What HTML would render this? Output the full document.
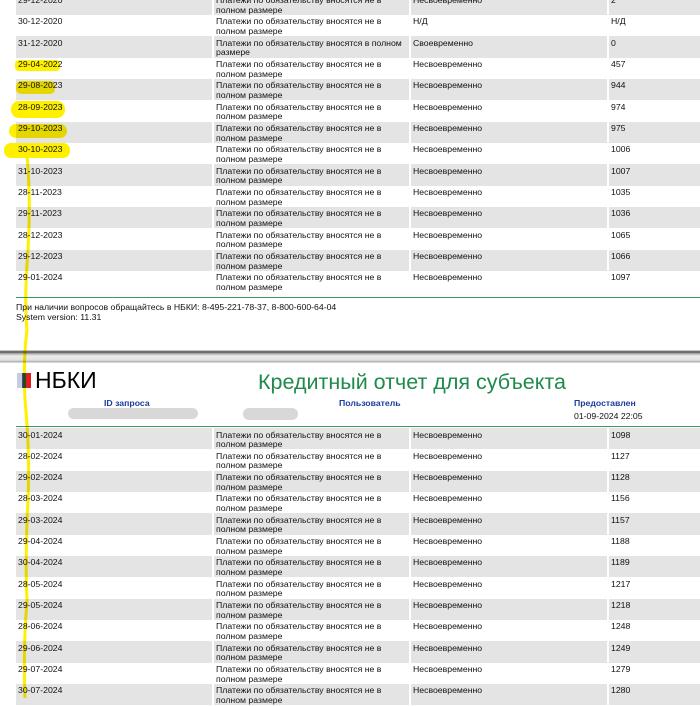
<!DOCTYPE html>
<html><head><meta charset="utf-8"><style>
*{margin:0;padding:0}
body{width:700px;height:698px;overflow:hidden;background:#fff;position:relative;font-family:"Liberation Sans",Arial,sans-serif;font-size:8.7px;color:#111}
.r{position:absolute;left:16px;width:700px;height:21.33px}
.r.g div{background:#e4e4e4}
.c{position:absolute;top:0;height:100%;padding:2.5px 3px 0 2px;box-sizing:border-box;line-height:9.6px}
.c1{left:0;width:196px}.c2{left:198px;width:195px}.c3{left:395px;width:196px}.c4{left:593px;width:110px}
.abs{position:absolute}
</style></head><body>
<div id="p1"></div>
<div class="abs" style="left:16px;top:297px;width:690px;height:1px;background:#3a9a60"></div>
<div class="abs" style="left:16px;top:302px;line-height:10px">При наличии вопросов обращайтесь в НБКИ: 8-495-221-78-37, 8-800-600-64-04<br>System version: 11.31</div>
<div class="abs" style="left:0;top:350px;width:700px;height:13px;background:linear-gradient(#fff 0,#888 1px,#555 2px,#bbb 4px,#ececec 6px,#e2e2e2 10px,#aaa 12px,#fff 13px)"></div>
<div class="abs" style="left:17px;top:373px;width:5px;height:15px;background:#c8cce0"></div>
<div class="abs" style="left:22px;top:373px;width:4px;height:15px;background:#2a50c8"></div>
<div class="abs" style="left:26px;top:373px;width:5px;height:15px;background:#e02020"></div>
<div class="abs" style="left:35px;top:367px;font-size:23px;color:#000">НБКИ</div>
<div class="abs" style="left:258px;top:370px;font-size:21.5px;color:#1f8a4c">Кредитный отчет для субъекта</div>
<div class="abs" style="left:104px;top:398px;font-weight:bold;color:#1c3c9c">ID запроса</div>
<div class="abs" style="left:339px;top:398px;font-weight:bold;color:#1c3c9c">Пользователь</div>
<div class="abs" style="left:574px;top:398px;font-weight:bold;color:#1c3c9c">Предоставлен</div>
<div class="abs" style="left:574px;top:411px">01-09-2024 22:05</div>
<div class="abs" style="left:68px;top:408px;width:130px;height:11px;border-radius:6px;background:#d8d8d8"></div>
<div class="abs" style="left:243px;top:408px;width:55px;height:12px;border-radius:6px;background:#d8d8d8"></div>
<div class="abs" style="left:16px;top:426px;width:690px;height:1px;background:#3a9a60"></div>
<div id="p2"></div>
<svg class="abs" style="left:0;top:0;mix-blend-mode:multiply" width="700" height="698">
<g fill="#fff000">
<rect x="15" y="60" width="45" height="11" rx="4"/>
<rect x="16" y="81" width="39" height="13" rx="5"/>
<rect x="11" y="101" width="54" height="17" rx="8"/>
<rect x="9" y="124" width="58" height="14" rx="7"/>
<rect x="4" y="143" width="66" height="15" rx="7"/>
</g>
<path d="M27 155 Q31 200 28 250 Q24 300 27 330 Q23 360 25 400 Q30 450 28 500 Q25 560 27 600 Q23 650 25 698" stroke="#fff000" stroke-width="3" fill="none"/>
</svg>
<script>
function rows(id,top,data,startGray){var h='';data.forEach(function(d,i){var g=(i%2==0)==startGray;h+='<div class="r'+(g?' g':'')+'" style="top:'+(top+i*21.33)+'px"><div class="c c1">'+d[0]+'</div><div class="c c2">'+d[1]+'</div><div class="c c3">'+d[2]+'</div><div class="c c4">'+d[3]+'</div></div>'});document.getElementById(id).innerHTML=h}
var P='Платежи по обязательству вносятся не в<br>полном размере',N='Несвоевременно';
rows('p1',-6.4,[['29-12-2020',P,N,'2'],['30-12-2020',P,'Н/Д','Н/Д'],['31-12-2020','Платежи по обязательству вносятся в полном<br>размере','Своевременно','0'],['29-04-2022',P,N,'457'],['29-08-2023',P,N,'944'],['28-09-2023',P,N,'974'],['29-10-2023',P,N,'975'],['30-10-2023',P,N,'1006'],['31-10-2023',P,N,'1007'],['28-11-2023',P,N,'1035'],['29-11-2023',P,N,'1036'],['28-12-2023',P,N,'1065'],['29-12-2023',P,N,'1066'],['29-01-2024',P,N,'1097']],true);
rows('p2',428,[['30-01-2024',P,N,'1098'],['28-02-2024',P,N,'1127'],['29-02-2024',P,N,'1128'],['28-03-2024',P,N,'1156'],['29-03-2024',P,N,'1157'],['29-04-2024',P,N,'1188'],['30-04-2024',P,N,'1189'],['28-05-2024',P,N,'1217'],['29-05-2024',P,N,'1218'],['28-06-2024',P,N,'1248'],['29-06-2024',P,N,'1249'],['29-07-2024',P,N,'1279'],['30-07-2024',P,N,'1280']],true);
</script>
</body></html>
